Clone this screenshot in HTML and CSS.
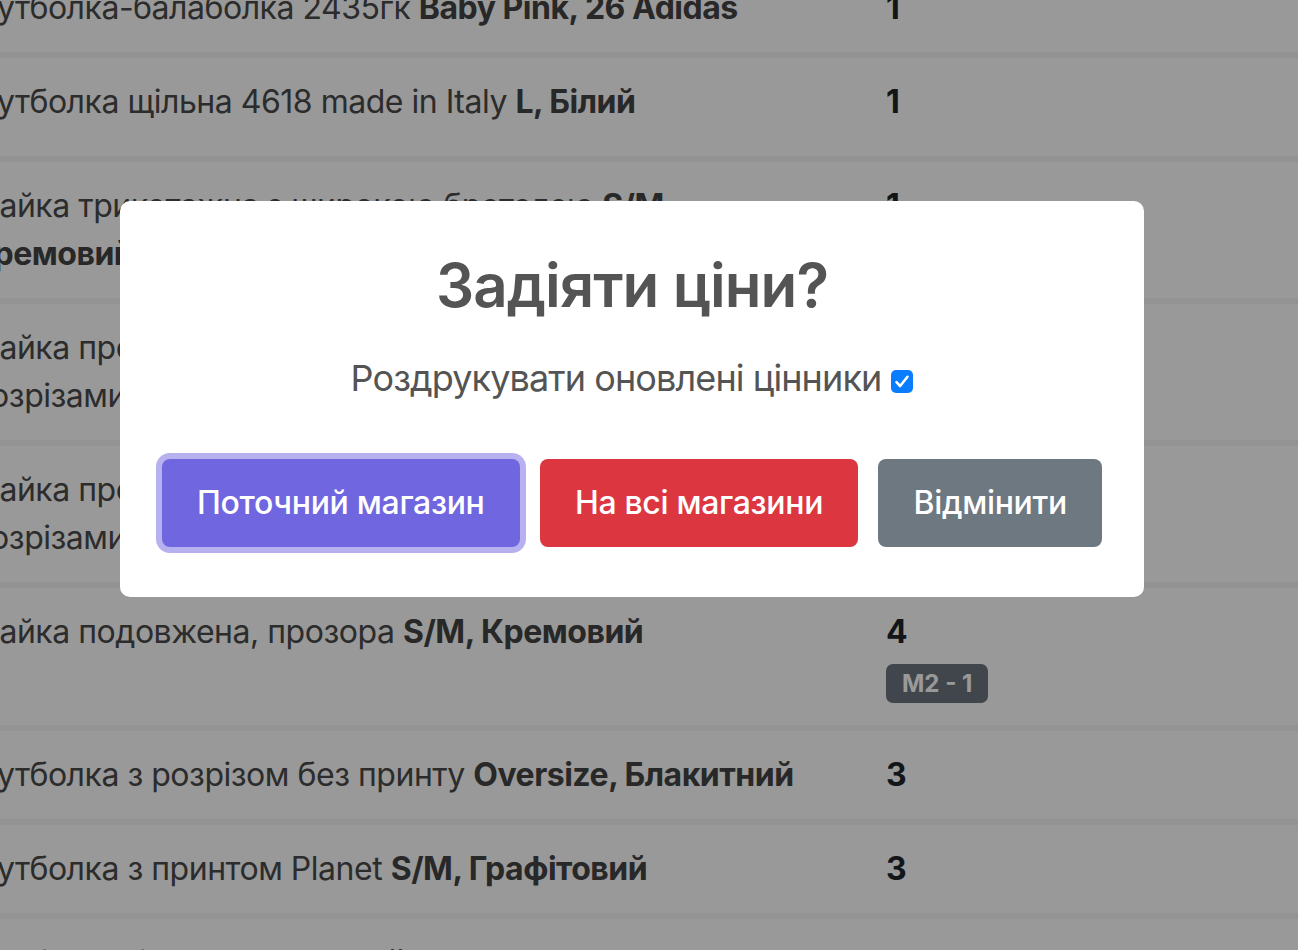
FILE: index.html
```html
<!DOCTYPE html>
<html lang="uk">
<head>
<meta charset="utf-8">
<title>Задіяти ціни?</title>
<link rel="stylesheet" href="styles.css">
</head>
<body>
<div class="list">
  <div class="row">
    <div class="name">Футболка-балаболка 2435гк <b>Baby Pink, 26 Adidas</b></div>
    <div class="qty">1</div>
  </div>
  <div class="row row-tall">
    <div class="name">Футболка щільна 4618 made in Italy <b>L, Білий</b></div>
    <div class="qty">1</div>
  </div>
  <div class="row">
    <div class="name">Майка трикотажна з широкою бретелею <b>S/M,</b><br><b>Кремовий</b></div>
    <div class="qty">1</div>
  </div>
  <div class="row">
    <div class="name">Майка прозора з боковими<br>розрізами <b>S/M, Чорний</b></div>
    <div class="qty">2</div>
  </div>
  <div class="row">
    <div class="name">Майка прозора з боковими<br>розрізами <b>S/M, Білий</b></div>
    <div class="qty">1</div>
  </div>
  <div class="row">
    <div class="name">Майка подовжена, прозора <b>S/M, Кремовий</b></div>
    <div class="qty">4<div><span class="badge">M2 - 1</span></div></div>
  </div>
  <div class="row">
    <div class="name">Футболка з розрізом без принту <b>Oversize, Блакитний</b></div>
    <div class="qty">3</div>
  </div>
  <div class="row">
    <div class="name">Футболка з принтом Planet <b>S/M, Графітовий</b></div>
    <div class="qty">3</div>
  </div>
  <div class="row">
    <div class="name">Футболка базова <b>M, Чорний</b></div>
    <div class="qty">2</div>
  </div>
</div>

<div class="backdrop">
  <div class="popup" role="dialog" aria-modal="true">
    <h2 class="title">Задіяти ціни?</h2>
    <div class="html-container">
      <label class="print-label">Роздрукувати оновлені цінники <input type="checkbox" class="check" checked></label>
    </div>
    <div class="actions">
      <button class="btn btn-confirm">Поточний магазин</button>
      <button class="btn btn-deny">На всі магазини</button>
      <button class="btn btn-cancel">Відмінити</button>
    </div>
  </div>
</div>
</body>
</html>
```
FILE: styles.css
```css
html, body {
  margin: 0;
  padding: 0;
}
body {
  background: #f5f5f5;
  font-family: Inter, "Noto Sans", "Liberation Sans", sans-serif;
  font-size: 32px;
  line-height: 1.5;
  letter-spacing: -0.015em;
  color: #212529;
  overflow: hidden;
}
.list {
  display: flex;
  flex-direction: column;
  gap: 6px;
  margin-top: -36px;
  margin-left: -29px;
}
.row {
  display: grid;
  grid-template-columns: 915px 1fr;
  background: #fff;
  padding: 20px 0;
}
.row-tall {
  padding-bottom: 30px;
}
.name {
  color: #4a4a4a;
  white-space: nowrap;
}
.name b {
  font-weight: 700;
  color: #444;
}
.qty {
  font-weight: 700;
  color: #212529;
}
.badge {
  display: inline-block;
  margin-top: 8px;
  padding: 8px 16px 7px;
  font-size: 24px;
  line-height: 1;
  font-weight: 700;
  letter-spacing: 0;
  color: #fff;
  background: #6c757d;
  border-radius: 7px;
}
.backdrop {
  position: fixed;
  inset: 0;
  background: rgba(0, 0, 0, 0.4);
  display: flex;
  align-items: flex-start;
  justify-content: flex-start;
  padding: 201px 0 0 120px;
  box-sizing: border-box;
}
.popup {
  width: 1024px;
  background: #fff;
  border-radius: 10px;
  padding: 0 0 40px;
  box-sizing: border-box;
  color: #545454;
}
.title {
  margin: 0;
  padding: 48px 60px 0;
  font-size: 60px;
  font-weight: 600;
  line-height: normal;
  letter-spacing: -0.015em;
  text-align: center;
  color: #545454;
}
.html-container {
  margin: 35px 51px 0;
  font-size: 36px;
  line-height: normal;
  letter-spacing: -0.025em;
  text-align: center;
  color: #545454;
}
.print-label {
  display: inline-flex;
  align-items: center;
  gap: 10px;
}
.check {
  -webkit-appearance: none;
  appearance: none;
  flex: none;
  width: 22px;
  height: 23px;
  margin: 6px 0 0;
  border-radius: 5px;
  background-color: #0a7dff;
  background-image: url("data:image/svg+xml,%3Csvg xmlns='http://www.w3.org/2000/svg' viewBox='0 0 22 23'%3E%3Cpath d='M5.5 12.2l3.6 3.8 7.4-9.2' fill='none' stroke='%23fff' stroke-width='2.6' stroke-linecap='round' stroke-linejoin='round'/%3E%3C/svg%3E");
  background-size: 100% 100%;
}
.actions {
  display: flex;
  flex-wrap: wrap;
  justify-content: center;
  align-items: center;
  margin: 49px auto 0;
}
.btn {
  margin: 10px;
  padding: 20px 35.2px;
  border: 0;
  border-radius: 8px;
  font-family: inherit;
  font-size: 32px;
  line-height: 1.5;
  font-weight: 500;
  letter-spacing: -0.01em;
  color: #fff;
  cursor: pointer;
}
.btn-confirm {
  background: #7066e0;
  box-shadow: 0 0 0 6px rgba(112, 102, 224, 0.5);
}
.btn-deny {
  background: #dc3741;
}
.btn-cancel {
  background: #6e7881;
}
```
